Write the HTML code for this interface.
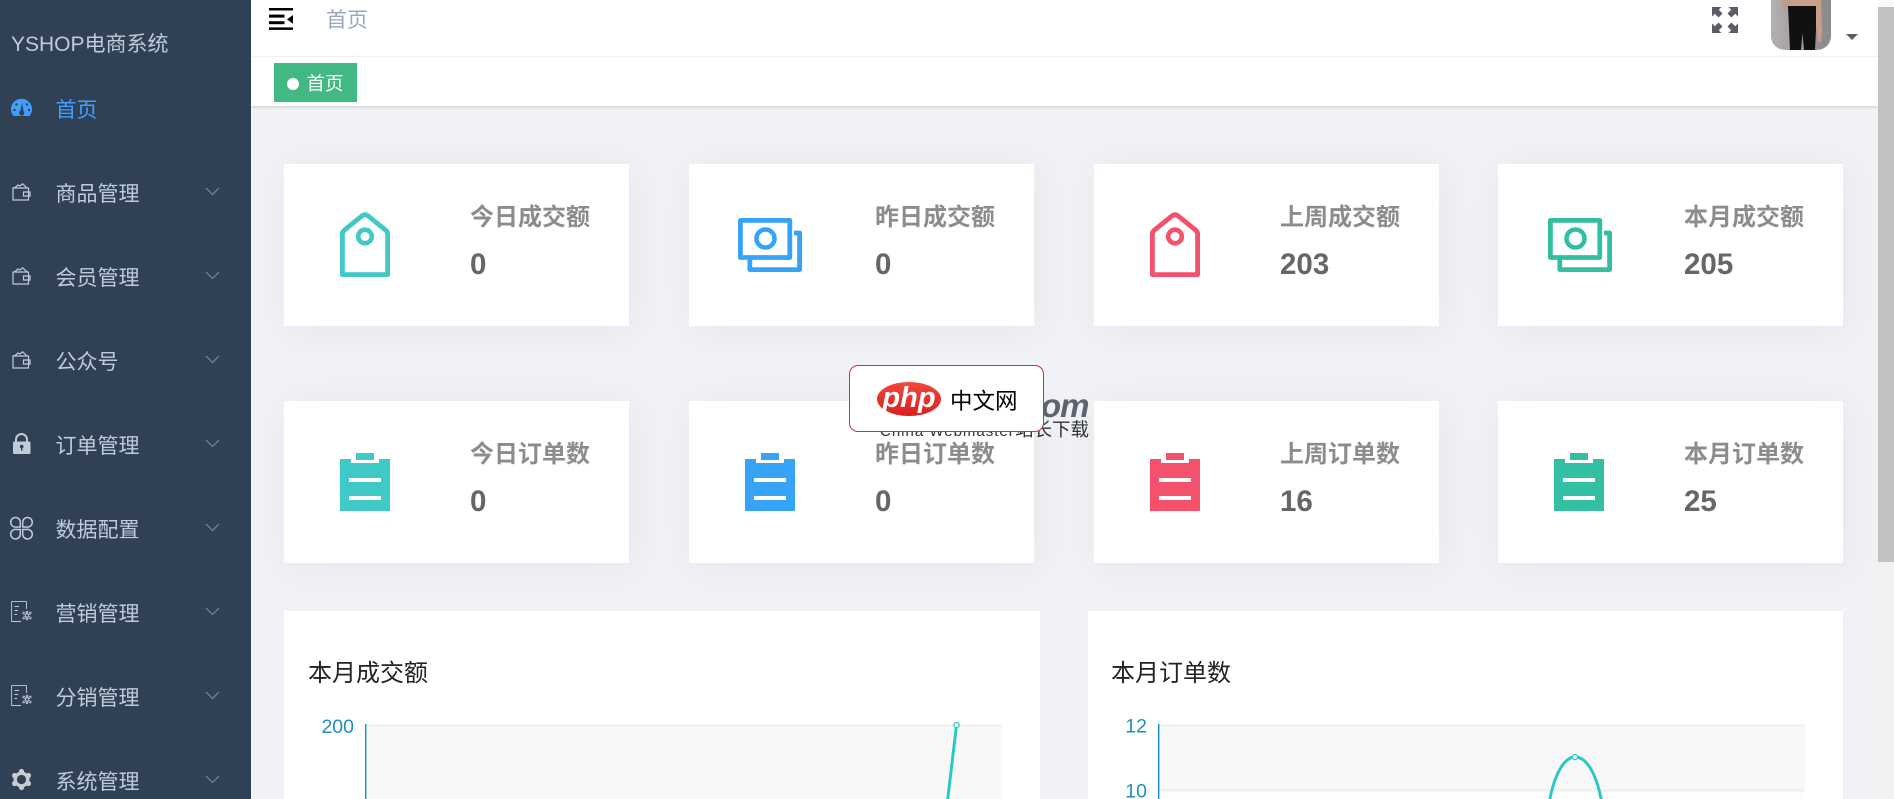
<!DOCTYPE html>
<html lang="zh-CN">
<head>
<meta charset="utf-8">
<title>YSHOP电商系统</title>
<style>
html,body{margin:0;padding:0;width:1894px;height:799px;overflow:hidden;background:#f0f2f5;}
body{position:relative;font-family:"Liberation Sans","Noto Sans CJK SC",sans-serif;}
.t{position:absolute;white-space:nowrap;line-height:1;}
.abs{position:absolute;}
#side{position:absolute;left:0;top:0;width:251px;height:799px;background:#304156;}
.m{position:absolute;left:55.5px;font-size:21px;line-height:1;color:#bfcbd9;white-space:nowrap;}
.ic{position:absolute;left:0;top:0;}
.card{position:absolute;width:345px;height:162px;background:#fff;box-shadow:4px 4px 40px rgba(0,0,0,.05);}
.lab{position:absolute;left:186px;top:42px;font-size:24px;line-height:1;font-weight:bold;color:#8c8c8c;white-space:nowrap;}
.num{position:absolute;left:186px;top:86px;font-size:29.5px;line-height:1;font-weight:bold;color:#666;white-space:nowrap;}
.chart{position:absolute;top:611px;height:188px;background:#fff;}
.ct{position:absolute;left:24px;top:51px;font-size:24px;line-height:1;color:#222;white-space:nowrap;}
</style>
</head>
<body>

<!-- main header -->
<div class="abs" style="left:251px;top:0;width:1627px;height:106px;background:#fff;box-shadow:0 1px 3px rgba(0,0,0,.14),0 0 3px rgba(0,0,0,.04);"></div>
<div class="abs" style="left:251px;top:56px;width:1627px;height:1px;background:#f1f1f1;"></div>

<svg class="abs" style="left:269px;top:8px" width="24" height="22" viewBox="0 0 24 22">
  <rect x="0" y="0" width="24" height="2.5" fill="#000"/>
  <rect x="0" y="6.6" width="15.5" height="3" fill="#000"/>
  <rect x="0" y="13.2" width="15.5" height="3" fill="#000"/>
  <rect x="0" y="19.4" width="24" height="2.5" fill="#000"/>
  <path d="M24 7 L18 11.4 L24 15.8 Z" fill="#000"/>
</svg>
<div class="t" style="left:326px;top:10px;font-size:21px;color:#97a8be;">首页</div>

<!-- tag -->
<div class="abs" style="left:274px;top:63px;width:83px;height:39px;background:#42b983;"></div>
<div class="abs" style="left:287px;top:78px;width:12px;height:12px;border-radius:50%;background:#fff;"></div>
<div class="t" style="left:306.5px;top:75px;font-size:18.5px;color:#fff;">首页</div>

<!-- fullscreen -->
<svg class="abs" style="left:1712px;top:7px" width="26" height="26" viewBox="0 0 26 26" fill="#5a5e66">
  <path d="M0 0 H9.5 L6.8 2.8 L10.5 6.5 L6.5 10.5 L2.8 6.8 L0 9.5 Z"/>
  <path d="M26 0 H16.5 L19.2 2.8 L15.5 6.5 L19.5 10.5 L23.2 6.8 L26 9.5 Z"/>
  <path d="M0 26 H9.5 L6.8 23.2 L10.5 19.5 L6.5 15.5 L2.8 19.2 L0 16.5 Z"/>
  <path d="M26 26 H16.5 L19.2 23.2 L15.5 19.5 L19.5 15.5 L23.2 19.2 L26 16.5 Z"/>
</svg>

<!-- avatar -->
<svg class="abs" style="left:1771px;top:0" width="60" height="50" viewBox="0 0 60 50">
  <defs>
    <linearGradient id="ag" x1="0" x2="1" y1="0" y2="0"><stop offset="0" stop-color="#b4b0b1"/><stop offset="1" stop-color="#8a8889"/></linearGradient>
    <clipPath id="ac"><path d="M0 0 H60 V36 A14 14 0 0 1 46 50 H14 A14 14 0 0 1 0 36 Z"/></clipPath>
  </defs>
  <g clip-path="url(#ac)">
    <rect width="60" height="50" fill="url(#ag)"/>
    <path d="M11 0 H18 V10 L13 9 Z" fill="#c49a84"/>
    <path d="M44 0 H50 L51 30 L50 42 L47 42 L45 25 Z" fill="#c99d86"/>
    <path d="M20 0 H45 V6 L18 6 Z" fill="#c9a08a"/>
    <path d="M17 6 H45 L45 30 L44 50 H33 L31.5 33 L30 50 H19 L18 28 Z" fill="#111"/>
  </g>
</svg>
<svg class="abs" style="left:1846px;top:34px" width="12" height="6" viewBox="0 0 12 6"><path d="M0 0 H12 L6 6 Z" fill="#5a5e66"/></svg>

<!-- sidebar -->
<div id="side">
  <div class="t" style="left:11px;top:34px;font-size:21px;color:#bfcbd9;">YSHOP电商系统</div>

  <div class="m" style="top:100px;color:#409eff;">首页</div>
  <div class="m" style="top:184px;">商品管理</div>
  <div class="m" style="top:268px;">会员管理</div>
  <div class="m" style="top:352px;">公众号</div>
  <div class="m" style="top:436px;">订单管理</div>
  <div class="m" style="top:520px;">数据配置</div>
  <div class="m" style="top:604px;">营销管理</div>
  <div class="m" style="top:688px;">分销管理</div>
  <div class="m" style="top:772px;">系统管理</div>

  <svg class="ic" width="251" height="799" viewBox="0 0 251 799">
    <defs>
      <g id="wal" fill="none" stroke="#bfcbd9" stroke-width="1.2">
        <path d="M1 5 H16.5 V17 H1 Z"/>
        <path d="M11.5 9 H18 V13 H11.5 Z"/>
        <path d="M2.5 5 L6 2 L8 3 L10.5 .8 L13 3 L15 5" />
      </g>
      <g id="chev"><path d="M0 0 L6.5 6.5 L13 0" fill="none" stroke="#77869a" stroke-width="1.2"/></g>
      <g id="doc" fill="none" stroke="#bfcbd9" stroke-width=".9">
        <path d="M15.5 8 V.6 H.6 V20.5 H10"/>
        <path d="M3.5 5.5 H8 M3.5 9.5 H7 M3.5 13.5 H6" stroke-width=".9"/>
        <circle cx="16" cy="14.5" r="1.6"/>
        <path d="M16 12.5 C13.5 9.5 18.5 9.5 16 12.5 M16 16.5 C13.5 19.5 18.5 19.5 16 16.5 M14 13.5 C10 12.5 12.5 9 14.5 12.7 M18 13.5 C22 12.5 19.5 9 17.5 12.7 M14 15.5 C10 16.5 12.5 20 14.5 16.3 M18 15.5 C22 16.5 19.5 20 17.5 16.3"/>
      </g>
    </defs>

    <!-- dashboard -->
    <path d="M13.5 116 A10.5 10.5 0 1 1 29.5 116 Z" fill="#409eff"/>
    <path d="M22.2 103 L20 112 H23.6 Z" fill="#304156"/>
    <circle cx="21.7" cy="113" r="2.6" fill="#304156"/>
    <circle cx="14.5" cy="110" r="1.2" fill="#304156"/><circle cx="16.5" cy="104.5" r="1.2" fill="#304156"/><circle cx="27" cy="104.5" r="1.2" fill="#304156"/><circle cx="29" cy="110" r="1.2" fill="#304156"/>

    <use href="#wal" x="12" y="183"/>
    <use href="#wal" x="12" y="267"/>
    <use href="#wal" x="12" y="351"/>

    <!-- lock -->
    <path d="M16 442 V439.5 A5.5 5.5 0 0 1 27 439.5 V442" fill="none" stroke="#bfcbd9" stroke-width="2"/>
    <rect x="13" y="441.5" width="17.5" height="12.5" rx="1.5" fill="#bfcbd9"/>
    <circle cx="21.7" cy="446.5" r="1.8" fill="#304156"/><rect x="21" y="447" width="1.5" height="3.5" fill="#304156"/>

    <!-- clover -->
    <g fill="none" stroke="#bfcbd9" stroke-width="1.5">
      <path d="M20.3 527 H16.5 A4.8 4.8 0 1 1 20.3 522.5 Z"/>
      <path d="M22.7 527 H26.5 A4.8 4.8 0 1 0 22.7 522.5 Z"/>
      <path d="M20.3 529.5 H16.5 A4.8 4.8 0 1 0 20.3 534 Z"/>
      <path d="M22.7 529.5 H26.5 A4.8 4.8 0 1 1 22.7 534 Z"/>
    </g>

    <use href="#doc" x="11" y="601"/>
    <use href="#doc" x="11" y="685"/>

    <!-- gear -->
    <g fill="#c8ccd2">
      <circle cx="21.5" cy="779.5" r="8"/>
      <circle cx="21.5" cy="771.5" r="2.6"/><circle cx="21.5" cy="787.5" r="2.6"/>
      <circle cx="14.6" cy="775.5" r="2.6"/><circle cx="28.4" cy="775.5" r="2.6"/>
      <circle cx="14.6" cy="783.5" r="2.6"/><circle cx="28.4" cy="783.5" r="2.6"/>
    </g>
    <circle cx="21.5" cy="779.5" r="4.6" fill="#304156"/>

    <use href="#chev" x="206" y="188"/>
    <use href="#chev" x="206" y="272"/>
    <use href="#chev" x="206" y="356"/>
    <use href="#chev" x="206" y="440"/>
    <use href="#chev" x="206" y="524"/>
    <use href="#chev" x="206" y="608"/>
    <use href="#chev" x="206" y="692"/>
    <use href="#chev" x="206" y="776"/>
  </svg>
</div>

<svg width="0" height="0" style="position:absolute">
  <defs>
    <symbol id="tag" viewBox="0 0 50 65" overflow="visible">
      <path d="M21.5 4.2 Q25 1.2 28.5 4.2 L45.5 18 Q47.6 19.6 47.6 22 V62.7 H2.4 V22 Q2.4 19.6 4.5 18 Z" fill="none" stroke="currentColor" stroke-width="4.8" stroke-linejoin="round"/>
      <circle cx="25" cy="24.5" r="6.8" fill="none" stroke="currentColor" stroke-width="4.6"/>
    </symbol>
    <symbol id="money" viewBox="0 0 64 54" overflow="visible">
      <path d="M2.4 2.4 H51.8 V39.5 H2.4 Z" fill="none" stroke="currentColor" stroke-width="4.8" stroke-linejoin="round"/>
      <path d="M56 15 H61.6 V51.6 H11.8 V41" fill="none" stroke="currentColor" stroke-width="4.8" stroke-linejoin="round"/>
      <circle cx="27.5" cy="20.5" r="9" fill="none" stroke="currentColor" stroke-width="4.6"/>
    </symbol>
    <symbol id="clip" viewBox="0 0 50 58" overflow="visible">
      <path d="M0 6 H11 V10 H39 V6 H50 V58 H0 Z M9 25 V29 H41 V25 Z M9 43 V47 H41 V43 Z" fill="currentColor" fill-rule="evenodd"/>
      <rect x="16" y="0" width="18" height="7" fill="currentColor"/>
    </symbol>
  </defs>
</svg>

<!-- row 1 -->
<div class="card" style="left:284px;top:164px;">
  <svg class="abs" style="left:56px;top:48px;color:#40c9c6" width="50" height="65"><use href="#tag"/></svg>
  <div class="lab">今日成交额</div><div class="num">0</div>
</div>
<div class="card" style="left:689px;top:164px;">
  <svg class="abs" style="left:49px;top:54px;color:#36a3f7" width="64" height="54"><use href="#money"/></svg>
  <div class="lab">昨日成交额</div><div class="num">0</div>
</div>
<div class="card" style="left:1094px;top:164px;">
  <svg class="abs" style="left:56px;top:48px;color:#f4516c" width="50" height="65"><use href="#tag"/></svg>
  <div class="lab">上周成交额</div><div class="num">203</div>
</div>
<div class="card" style="left:1498px;top:164px;">
  <svg class="abs" style="left:50px;top:54px;color:#34bfa3" width="64" height="54"><use href="#money"/></svg>
  <div class="lab">本月成交额</div><div class="num">205</div>
</div>

<!-- row 2 -->
<div class="card" style="left:284px;top:401px;">
  <svg class="abs" style="left:56px;top:52px;color:#40c9c6" width="50" height="58"><use href="#clip"/></svg>
  <div class="lab">今日订单数</div><div class="num">0</div>
</div>
<div class="card" style="left:689px;top:401px;">
  <svg class="abs" style="left:56px;top:52px;color:#36a3f7" width="50" height="58"><use href="#clip"/></svg>
  <div class="lab">昨日订单数</div><div class="num">0</div>
</div>
<div class="card" style="left:1094px;top:401px;">
  <svg class="abs" style="left:56px;top:52px;color:#f4516c" width="50" height="58"><use href="#clip"/></svg>
  <div class="lab">上周订单数</div><div class="num">16</div>
</div>
<div class="card" style="left:1498px;top:401px;">
  <svg class="abs" style="left:56px;top:52px;color:#34bfa3" width="50" height="58"><use href="#clip"/></svg>
  <div class="lab">本月订单数</div><div class="num">25</div>
</div>

<!-- charts -->
<div class="chart" style="left:284px;width:756px;">
  <div class="ct">本月成交额</div>
</div>
<div class="chart" style="left:1088px;width:755px;">
  <div class="ct" style="left:23px;">本月订单数</div>
</div>
<svg class="abs" style="left:0;top:0" width="1894" height="799" viewBox="0 0 1894 799">
  <!-- chart 1 -->
  <rect x="366" y="725" width="636" height="74" fill="#f8f8f9"/>
  <rect x="366" y="724.5" width="636" height="2" fill="#eeeeee"/>
  <rect x="365" y="724" width="1.4" height="75" fill="#1a8fc4"/>
  <text x="354" y="733" text-anchor="end" font-family="Liberation Sans,sans-serif" font-size="19.5" fill="#1f8fc0">200</text>
  <path d="M947.5 801 L956.5 725" fill="none" stroke="#2ec7c9" stroke-width="3"/>
  <circle cx="956.5" cy="725" r="2.6" fill="#fff" stroke="#2ec7c9" stroke-width="1.3"/>
  <!-- chart 2 -->
  <rect x="1159" y="725" width="646" height="65" fill="#f8f8f9"/>
  <rect x="1159" y="790" width="646" height="9" fill="#fdfdfd"/>
  <rect x="1159" y="724.5" width="646" height="2" fill="#eeeeee"/>
  <rect x="1159" y="789.5" width="646" height="2" fill="#eeeeee"/>
  <rect x="1158" y="724" width="1.4" height="75" fill="#1a8fc4"/>
  <text x="1147" y="732.5" text-anchor="end" font-family="Liberation Sans,sans-serif" font-size="19.5" fill="#1f8fc0">12</text>
  <text x="1147" y="797.5" text-anchor="end" font-family="Liberation Sans,sans-serif" font-size="19.5" fill="#1f8fc0">10</text>
  <path d="M1549.5 801 C1555 772 1565 757 1575 757 C1586 757 1596 772 1601.5 801" fill="none" stroke="#2ec7c9" stroke-width="3"/>
  <circle cx="1575" cy="757" r="2.6" fill="#fff" stroke="#2ec7c9" stroke-width="1.3"/>
</svg>

<!-- watermark -->
<div class="t" style="left:1041px;top:389px;font-size:33px;font-weight:bold;font-style:italic;color:#5b6470;letter-spacing:-1px;">om</div>
<div class="t" style="left:880px;top:424px;font-size:15px;letter-spacing:1px;color:#333;">China Webmaster</div>
<div class="t" style="left:1015px;top:421px;font-size:18.5px;color:#333;">站长下载</div>
<div class="abs" style="left:849px;top:365px;width:193px;height:65px;background:#fff;border:1px solid #c8323f;border-radius:9px;"></div>
<svg class="abs" style="left:877px;top:382px" width="64" height="34" viewBox="0 0 64 34">
  <defs><linearGradient id="pg" x1="0" x2="0" y1="0" y2="1"><stop offset="0" stop-color="#f2473c"/><stop offset="1" stop-color="#db1f1f"/></linearGradient></defs>
  <ellipse cx="32" cy="17" rx="32" ry="17" fill="url(#pg)"/>
  <text x="32" y="25" text-anchor="middle" font-family="Liberation Sans,sans-serif" font-size="29" font-weight="bold" font-style="italic" fill="#fff">php</text>
</svg>
<div class="t" style="left:950px;top:390.5px;font-size:22.5px;color:#000;">中文网</div>

<!-- scrollbar -->
<div class="abs" style="left:1878px;top:0;width:16px;height:799px;background:#f1f1f1;"></div>
<div class="abs" style="left:1878px;top:0;width:16px;height:7px;background:#fafafa;"></div>
<div class="abs" style="left:1878px;top:7px;width:16px;height:555px;background:#c1c1c1;"></div>

</body>
</html>
